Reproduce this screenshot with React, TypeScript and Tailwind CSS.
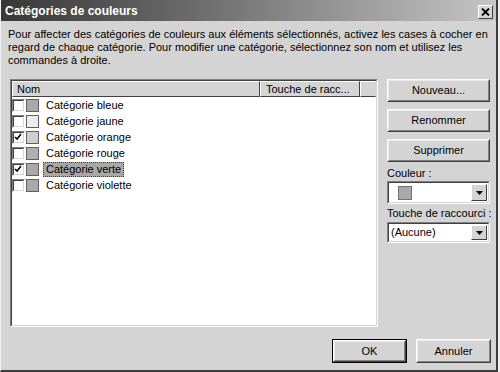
import React from "react";

const font = { fontFamily: '"Liberation Sans", Arial, sans-serif' };

function Btn({ children, className = "" }: { children: React.ReactNode; className?: string }) {
  return (
    <div className={"border border-t-white border-l-white border-r-[#404040] border-b-[#404040] bg-[#d4d4d4] " + className}>
      <div className="h-full border border-t-[#e8e8e8] border-l-[#e8e8e8] border-r-[#808080] border-b-[#808080] flex items-center justify-center text-[11px] text-black">
        {children}
      </div>
    </div>
  );
}

function Check({ checked }: { checked: boolean }) {
  return (
    <div className="w-[13px] h-[13px] border border-t-[#808080] border-l-[#808080] border-r-white border-b-white">
      <div className="w-full h-full bg-white border border-t-[#404040] border-l-[#404040] border-r-[#d4d4d4] border-b-[#d4d4d4] flex items-center justify-center">
        {checked && (
          <svg width="9" height="9" viewBox="0 0 9 9">
            <path d="M1 4 L3 6 L7 1" fill="none" stroke="black" strokeWidth="1.6" />
          </svg>
        )}
      </div>
    </div>
  );
}

function Swatch({ color }: { color: string }) {
  return <div className="w-[13px] h-[13px] border border-[#606060]" style={{ background: color }} />;
}

const rows = [
  { name: "Catégorie bleue", checked: false, color: "#a9a9a9" },
  { name: "Catégorie jaune", checked: false, color: "#ececec" },
  { name: "Catégorie orange", checked: true, color: "#cecece" },
  { name: "Catégorie rouge", checked: false, color: "#b0b0b0" },
  { name: "Catégorie verte", checked: true, color: "#a9a9a9", selected: true },
  { name: "Catégorie violette", checked: false, color: "#a9a9a9" },
];

function Arrow() {
  return (
    <div className="w-[16px] h-full border border-t-white border-l-white border-r-[#404040] border-b-[#404040] bg-[#d4d4d4] flex items-center justify-center">
      <svg width="7" height="4" viewBox="0 0 7 4">
        <path d="M0 0 H7 L3.5 4 Z" fill="black" />
      </svg>
    </div>
  );
}

function Combo({ children, h }: { children: React.ReactNode; h: string }) {
  return (
    <div className={"border border-t-[#808080] border-l-[#808080] border-r-white border-b-white " + h}>
      <div className="h-full bg-white border border-t-[#404040] border-l-[#404040] border-r-[#d4d4d4] border-b-[#d4d4d4] flex items-center p-px">
        <div className="flex-1 flex items-center h-full">{children}</div>
        <Arrow />
      </div>
    </div>
  );
}

export default function App() {
  return (
    <div className="w-[500px] h-[372px] bg-[#f0f0f0] flex" style={font}>
      <div className="w-[498px] h-[372px] bg-[#d4d4d4] border-l border-l-[#f4f4f4] border-r-2 border-r-[#3c3c3c] border-b-2 border-b-[#3c3c3c] flex flex-col">
        <div className="h-[21px] bg-linear-to-r from-[#383838] to-[#c6c6c6] flex items-center pl-[4px] pr-[3px]">
          <div className="flex-1 text-white font-bold text-[12px] leading-none">Catégories de couleurs</div>
          <div className="w-[15px] h-[14px] bg-[#d4d4d4] border border-t-white border-l-white border-r-[#404040] border-b-[#404040] flex items-center justify-center mt-[3px]">
            <svg width="9" height="8" viewBox="0 0 9 8">
              <path d="M1 0.5 L8 7.5 M8 0.5 L1 7.5" stroke="black" strokeWidth="1.8" />
            </svg>
          </div>
        </div>
        <div className="px-[7px] pt-[7px] text-[11px] leading-[13px] text-black whitespace-nowrap">
          <div>Pour affecter des catégories de couleurs aux éléments sélectionnés, activez les cases à cocher en</div>
          <div>regard de chaque catégorie. Pour modifier une catégorie, sélectionnez son nom et utilisez les</div>
          <div>commandes à droite.</div>
        </div>
        <div className="flex mt-[12px] pl-[9px]">
          <div className="w-[368px] h-[248px] border border-t-[#808080] border-l-[#808080] border-r-white border-b-white">
            <div className="h-full bg-white border border-t-[#404040] border-l-[#404040] border-r-[#d4d4d4] border-b-[#d4d4d4] flex flex-col">
              <div className="flex h-[16px] bg-[#d4d4d4] text-[11px]">
                <div className="w-[248px] border border-t-white border-l-white border-r-[#404040] border-b-[#404040] pl-[4px] flex items-center">Nom</div>
                <div className="w-[100px] border border-t-white border-l-white border-r-[#404040] border-b-[#404040] pl-[5px] flex items-center">Touche de racc...</div>
                <div className="flex-1 border border-t-white border-l-white border-r-[#d4d4d4] border-b-[#404040]" />
              </div>
              <div className="flex flex-col">
                {rows.map((r) => (
                  <div key={r.name} className="h-[16px] flex items-center gap-px text-[11px]">
                    <Check checked={r.checked} />
                    <Swatch color={r.color} />
                    <div
                      className={
                        "ml-[3px] px-[2px] h-[15px] flex items-center " +
                        (r.selected ? "bg-[#a8a8a8] border border-dotted border-[#404040]" : "border border-transparent")
                      }
                    >
                      {r.name}
                    </div>
                  </div>
                ))}
              </div>
            </div>
          </div>
          <div className="ml-[9px] w-[103px] flex flex-col text-[11px]">
            <Btn className="h-[23px]">Nouveau...</Btn>
            <Btn className="h-[23px] mt-[7px]">Renommer</Btn>
            <Btn className="h-[23px] mt-[7px]">Supprimer</Btn>
            <div className="mt-[5px] leading-[13px]">Couleur :</div>
            <div className="mt-px">
              <Combo h="h-[23px]">
                <div className="ml-[8px] w-[14px] h-[14px] bg-[#a9a9a9] border border-[#707070]" />
              </Combo>
            </div>
            <div className="mt-[3px] leading-[13px] whitespace-nowrap">Touche de raccourci :</div>
            <div className="mt-[2px]">
              <Combo h="h-[21px]">
                <span className="pl-[1px]">(Aucune)</span>
              </Combo>
            </div>
          </div>
        </div>
        <div className="flex justify-end gap-[9px] mt-[12px] pr-[5px]">
          <div className="border border-black">
            <Btn className="w-[73px] h-[22px]">OK</Btn>
          </div>
          <Btn className="w-[75px] h-[24px]">Annuler</Btn>
        </div>
      </div>
    </div>
  );
}
